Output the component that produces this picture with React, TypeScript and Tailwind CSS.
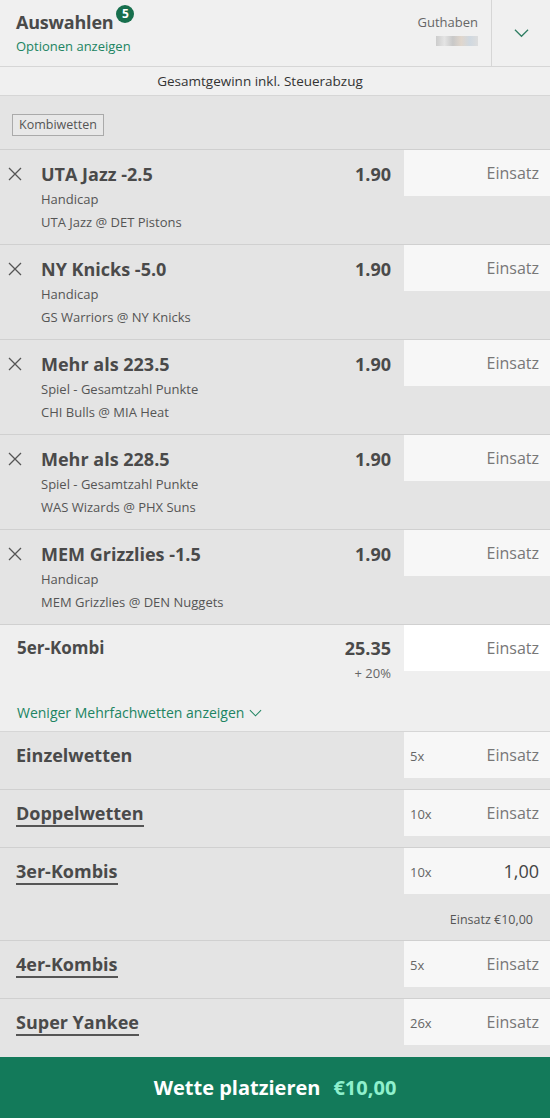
import React from "react";

const font = { fontFamily: '"Open Sans", "Noto Sans", sans-serif' };

const selections = [
    { title: "UTA Jazz -2.5", market: "Handicap", event: "UTA Jazz @ DET Pistons", odds: "1.90" },
    { title: "NY Knicks -5.0", market: "Handicap", event: "GS Warriors @ NY Knicks", odds: "1.90" },
    { title: "Mehr als 223.5", market: "Spiel - Gesamtzahl Punkte", event: "CHI Bulls @ MIA Heat", odds: "1.90" },
    { title: "Mehr als 228.5", market: "Spiel - Gesamtzahl Punkte", event: "WAS Wizards @ PHX Suns", odds: "1.90" },
    { title: "MEM Grizzlies -1.5", market: "Handicap", event: "MEM Grizzlies @ DEN Nuggets", odds: "1.90" },
];

const multiples = [
    { name: "Einzelwetten", count: "5x", underline: false },
    { name: "Doppelwetten", count: "10x", underline: true },
    { name: "3er-Kombis", count: "10x", underline: true, value: "1,00", total: "Einsatz €10,00" },
    { name: "4er-Kombis", count: "5x", underline: true },
    { name: "Super Yankee", count: "26x", underline: true, last: true },
];

function Chevron({ className }: { className?: string }) {
    return (
        <svg viewBox="0 0 16 10" className={className} fill="none" stroke="currentColor" strokeWidth="1.3">
            <path d="M1 1.5 L8 8.5 L15 1.5" />
        </svg>
    );
}

function Cross() {
    return (
        <svg viewBox="0 0 14 14" className="w-[14px] h-[14px] text-[#555]" stroke="currentColor" strokeWidth="1.3">
            <path d="M1 1 L13 13 M13 1 L1 13" />
        </svg>
    );
}

export default function App() {
    return (
        <div className="w-[550px] min-h-screen bg-[#e4e4e4] text-[#4a4a4a]" style={font}>
            {/* header */}
            <div className="flex h-[67px] bg-[#f0f0f0] border-b border-[#d6d6d6]">
                <div className="flex-1 pl-4 pt-[9px]">
                    <div className="flex items-start">
                        <span className="text-[18px] font-bold text-[#4a4a4a] leading-[26px] tracking-[-0.2px]">Auswahlen</span>
                        <span className="ml-[3px] mt-[-4px] w-[18px] h-[18px] rounded-full bg-[#176f4d] text-white text-[12px] font-bold flex items-center justify-center">
                            5
                        </span>
                    </div>
                    <div className="text-[13px] text-[#208462] leading-[20px] mt-[1px]">Optionen anzeigen</div>
                </div>
                <div className="flex flex-col items-end pr-[13px] pt-[12px]">
                    <span className="text-[13px] text-[#666] leading-[20px]">Guthaben</span>
                    <span className="mt-[4px] w-[42px] h-[10px] bg-[linear-gradient(90deg,#ccc,#e4e4e4,#c8c8c8,#e0d6cc,#cfd8e0,#ddd)]"></span>
                </div>
                <div className="w-[59px] border-l border-[#d6d6d6] flex items-center justify-center">
                    <Chevron className="w-[15px] h-[10px] text-[#2e7d62]" />
                </div>
            </div>

            <div className="h-[29px] bg-[#f0f0f0] border-b border-[#d6d6d6] flex items-center justify-center pr-[30px] text-[13.5px] text-[#333]">
                Gesamtgewinn inkl. Steuerabzug
            </div>

            <div className="h-[54px] border-b border-[#cfcfcf] pl-3 pt-[15px]">
                <button className="h-[22px] px-[6px] border border-[#aaa] bg-[#e8e8e8] text-[12.5px] text-[#555] leading-[20px]">
                    Kombiwetten
                </button>
            </div>

            {/* selections */}
            {selections.map((s) => (
                <div key={s.title} className="h-[95px] flex border-b border-[#d0d0d0]">
                    <div className="w-[41px] pl-[8px] pt-[17px]">
                        <Cross />
                    </div>
                    <div className="flex-1 pt-[10px]">
                        <div className="text-[18px] font-bold leading-[28px] text-[#4a4a4a]">{s.title}</div>
                        <div className="text-[13px] leading-[23px] text-[#555]">{s.market}</div>
                        <div className="text-[13px] leading-[23px] text-[#555]">{s.event}</div>
                    </div>
                    <div className="pr-[13px] pt-[10px] text-[18px] font-bold leading-[28px] text-[#4a4a4a]">{s.odds}</div>
                    <div className="w-[146px] h-[46px] bg-[#f7f7f7] flex items-center justify-end pr-[11px] text-[16px] text-[#777]">
                        Einsatz
                    </div>
                </div>
            ))}

            {/* 5er-Kombi */}
            <div className="h-[107px] bg-[#efefef] border-b border-[#d6d6d6]">
                <div className="flex">
                    <div className="flex-1 pl-[17px] pt-[10px] text-[17px] font-bold leading-[26px]">5er-Kombi</div>
                    <div className="pr-[13px] pt-[10px] text-right">
                        <div className="text-[18px] font-bold leading-[26px]">25.35</div>
                        <div className="text-[13px] leading-[24px] text-[#666]">+ 20%</div>
                    </div>
                    <div className="w-[146px] h-[46px] bg-white flex items-center justify-end pr-[11px] text-[16px] text-[#777]">
                        Einsatz
                    </div>
                </div>
                <div className="pl-[17px] mt-[17px] flex items-center text-[14px] text-[#208462]">
                    Weniger Mehrfachwetten anzeigen
                    <Chevron className="ml-[5px] w-[13px] h-[8px]" />
                </div>
            </div>

            {/* multiples */}
            {multiples.map((m) => (
                <div
                    key={m.name}
                    className={`${m.total ? "h-[93px]" : "h-[58px]"} ${m.last ? "" : "border-b border-[#d0d0d0]"}`}
                >
                    <div className="flex">
                        <div className="flex-1 pl-4 pt-[10px]">
                            <span
                                className={`text-[18px] font-bold leading-[26px] text-[#4a4a4a] ${
                                    m.underline ? "border-b-2 border-[#555]" : ""
                                }`}
                            >
                                {m.name}
                            </span>
                        </div>
                        <div className="w-[146px] h-[46px] bg-[#f7f7f7] flex items-center pl-[6px] pr-[11px]">
                            <span className="text-[13px] text-[#666] mt-[4px]">{m.count}</span>
                            <span className={`ml-auto ${m.value ? "text-[18px] text-[#444]" : "text-[16px] text-[#777]"}`}>
                                {m.value ?? "Einsatz"}
                            </span>
                        </div>
                    </div>
                    {m.total && (
                        <div className="text-right pr-[17px] mt-[17px] text-[12.5px] text-[#555]">{m.total}</div>
                    )}
                </div>
            ))}

            <button className="w-full h-[61px] bg-[#137a5a] flex items-center justify-center text-[20px] font-bold text-white">
                Wette platzieren
                <span className="ml-[13px] text-[#8ff0cd]">€10,00</span>
            </button>
        </div>
    );
}
